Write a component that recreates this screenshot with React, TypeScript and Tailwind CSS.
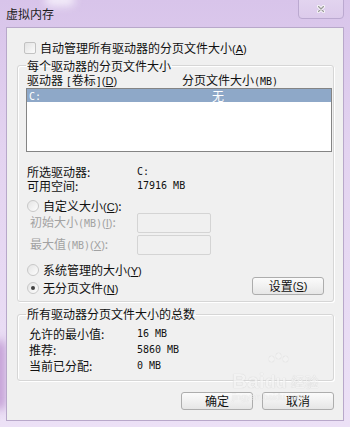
import React from "react";

const K = ({ c }: { c: string }) => (
  <span className="font-['Liberation_Sans',sans-serif] text-[11px]">
    (<span className="underline underline-offset-[1px]">{c}</span>)
  </span>
);

const M = ({ children }: { children: React.ReactNode }) => (
  <span className="font-['DejaVu_Sans_Mono',monospace] text-[10px]">{children}</span>
);

const Radio = ({ checked }: { checked?: boolean }) => (
  <span className="flex h-[12px] w-[12px] shrink-0 items-center justify-center rounded-full border border-[#c8c8c8] bg-[linear-gradient(135deg,#e4e4e4,#fdfdfd)]">
    {checked ? <span className="h-[4px] w-[4px] rounded-full bg-[#404040]" /> : null}
  </span>
);

const Btn = ({ children, className }: { children: React.ReactNode; className?: string }) => (
  <div
    className={
      "flex h-[18px] w-[72px] items-center justify-center rounded-[3px] border border-[#adadad] bg-[linear-gradient(180deg,#fbfbfb_0%,#f1f1f1_50%,#e6e6e6_100%)] text-[#111] " +
      (className ?? "")
    }
  >
    {children}
  </div>
);

export default function App() {
  return (
    <div className="relative h-[427px] w-[350px] overflow-hidden bg-[linear-gradient(180deg,#d8c4ea_0%,#e3d3f0_35%,#ece1f6_100%)] font-['Noto_Sans_CJK_SC','Noto_Sans',sans-serif] text-[12px] leading-[14px] text-[#111]">
      <div className="absolute left-[-8px] top-[340px] h-[70px] w-[14px] rounded-full bg-[#c4a0d6] blur-[5px]" />
      <div className="absolute left-[45px] top-[-6px] h-[12px] w-[30px] rounded-full bg-[#f4eefa] blur-[4px]" />

      {/* title bar */}
      <div className="relative flex h-[27px]">
        <div className="pl-[6px] pt-[7px] text-[12px] leading-[14px] text-[#1c1c1c]">虚拟内存</div>
        <div className="ml-auto mr-[6px] -mt-[1px] flex h-[20px] w-[46px] items-center justify-center rounded-b-[4px] border border-[#bba9d0] bg-[linear-gradient(180deg,#e2d4ef,#dccbeb)]">
          <svg width="8" height="8" viewBox="0 0 8 8">
            <path d="M1.5 1.5 L6.5 6.5 M6.5 1.5 L1.5 6.5" stroke="#ffffff" strokeWidth="3" strokeLinecap="round" />
            <path d="M1.5 1.5 L6.5 6.5 M6.5 1.5 L1.5 6.5" stroke="#9a9a9a" strokeWidth="1.4" strokeLinecap="round" />
          </svg>
        </div>
      </div>

      {/* client */}
      <div className="relative ml-[6px] flex h-[394px] w-[338px] flex-col border border-[#b8a8ca] bg-[#f0f0f0]">
        {/* auto manage checkbox */}
        <div className="ml-[17px] mt-[13px] flex h-[14px] items-center gap-[4px]">
          <span className="h-[12px] w-[12px] rounded-[2px] border border-[#c2c2c2] bg-[linear-gradient(135deg,#e3e3e3,#fbfbfb)]" />
          <span>
            自动管理所有驱动器的分页文件大小<K c="A" />
          </span>
        </div>

        {/* group 1 */}
        <fieldset className="ml-[10px] mt-[4px] w-[317px] rounded-[3px] border border-[#d6d6d6] pb-[6px] pl-[8px] pr-[1px] shadow-[inset_1px_1px_0_#ffffff,1px_1px_0_#ffffff]">
          <legend className="px-[1px] leading-[13px]">每个驱动器的分页文件大小</legend>
          <div className="mt-[2px] flex h-[14px] items-center">
            <span className="w-[156px] pl-[1px]">
              驱动器 <M>[</M>卷标<M>]</M>
              <K c="D" />
            </span>
            <span>
              分页文件大小<M>(MB)</M>
            </span>
          </div>
          <div className="h-[64px] w-[306px] border border-[#848484] bg-white">
            <div className="flex h-[13px] items-center bg-[#8ea8c8] text-white">
              <span className="w-[185px] pl-[2px]">
                <M>C:</M>
              </span>
              <span>无</span>
            </div>
          </div>

          <div className="mt-[13px] flex h-[14px] items-center">
            <span className="w-[111px] pl-[1px]">所选驱动器:</span>
            <M>C:</M>
          </div>
          <div className="flex h-[14px] items-center">
            <span className="w-[111px] pl-[1px]">可用空间:</span>
            <M>17916 MB</M>
          </div>

          <div className="mt-[6px] flex h-[14px] items-center gap-[4px] pl-[1px]">
            <Radio />
            <span>
              自定义大小<K c="C" />:
            </span>
          </div>
          <div className="flex h-[20px] items-center">
            <span className="w-[111px] pl-[4px] text-[#a2a2a2]">
              初始大小<M>(MB)</M>
              <K c="I" />:
            </span>
            <span className="h-[20px] w-[74px] rounded-[2px] border border-[#d4d4d4] bg-[#f0f0f0]" />
          </div>
          <div className="mt-[2px] flex h-[20px] items-center">
            <span className="w-[111px] pl-[4px] text-[#a2a2a2]">
              最大值<M>(MB)</M>
              <K c="X" />:
            </span>
            <span className="h-[20px] w-[74px] rounded-[2px] border border-[#d4d4d4] bg-[#f0f0f0]" />
          </div>

          <div className="mt-[8px] flex h-[14px] items-center gap-[4px] pl-[1px]">
            <Radio />
            <span>
              系统管理的大小<K c="Y" />
            </span>
          </div>
          <div className="flex h-[18px] items-end justify-between">
            <div className="flex h-[14px] items-center gap-[4px] pl-[1px]">
              <Radio checked />
              <span>
                无分页文件<K c="N" />
              </span>
            </div>
            <Btn className="mr-[8px]">
              设置<K c="S" />
            </Btn>
          </div>
        </fieldset>

        {/* group 2 */}
        <fieldset className="ml-[10px] mt-[5px] w-[317px] rounded-[3px] border border-[#d6d6d6] pb-[6px] pl-[8px] pr-[1px] shadow-[inset_1px_1px_0_#ffffff,1px_1px_0_#ffffff]">
          <legend className="px-[1px] leading-[14px]">所有驱动器分页文件大小的总数</legend>
          <div className="mt-[5px] flex h-[16px] items-center">
            <span className="w-[111px] pl-[3px]">允许的最小值:</span>
            <M>16 MB</M>
          </div>
          <div className="flex h-[16px] items-center">
            <span className="w-[111px] pl-[3px]">推荐:</span>
            <M>5860 MB</M>
          </div>
          <div className="flex h-[16px] items-center">
            <span className="w-[111px] pl-[3px]">当前已分配:</span>
            <M>0 MB</M>
          </div>
        </fieldset>

        <div className="mt-[11px] flex justify-end gap-[9px] pr-[9px]">
          <Btn>确定</Btn>
          <Btn>取消</Btn>
        </div>
      </div>

      {/* watermark */}
      <div className="pointer-events-none absolute left-[232px] top-[370px] opacity-70">
        <div className="relative flex items-end">
          <span className="font-['Liberation_Sans',sans-serif] text-[21px] font-bold leading-[22px] text-[#f4f4f4] [text-shadow:0_0_1px_#b0b0b0]">
            Bai
          </span>
          <span className="relative font-['Liberation_Sans',sans-serif] text-[18px] font-bold leading-[20px] text-[#f4f4f4] [text-shadow:0_0_1px_#b0b0b0]">
            du
            <span className="absolute left-[4px] top-[-16px] flex gap-[2px]">
              <span className="h-[6px] w-[5px] rounded-full bg-[#f4f4f4] shadow-[0_0_1px_#b0b0b0]" />
              <span className="mt-[-3px] h-[6px] w-[5px] rounded-full bg-[#f4f4f4] shadow-[0_0_1px_#b0b0b0]" />
              <span className="h-[6px] w-[5px] rounded-full bg-[#f4f4f4] shadow-[0_0_1px_#b0b0b0]" />
            </span>
          </span>
          <span className="ml-[4px] mb-[4px] text-[14px] leading-[14px] text-[#f4f4f4] [text-shadow:0_0_1px_#b0b0b0]">
            经验
          </span>
        </div>
        <div className="mt-[1px] font-['Liberation_Sans',sans-serif] text-[9px] leading-[9px] text-[#f4f4f4] [text-shadow:0_0_1px_#c0c0c0]">
          jingyan.baidu.com
        </div>
      </div>
    </div>
  );
}
